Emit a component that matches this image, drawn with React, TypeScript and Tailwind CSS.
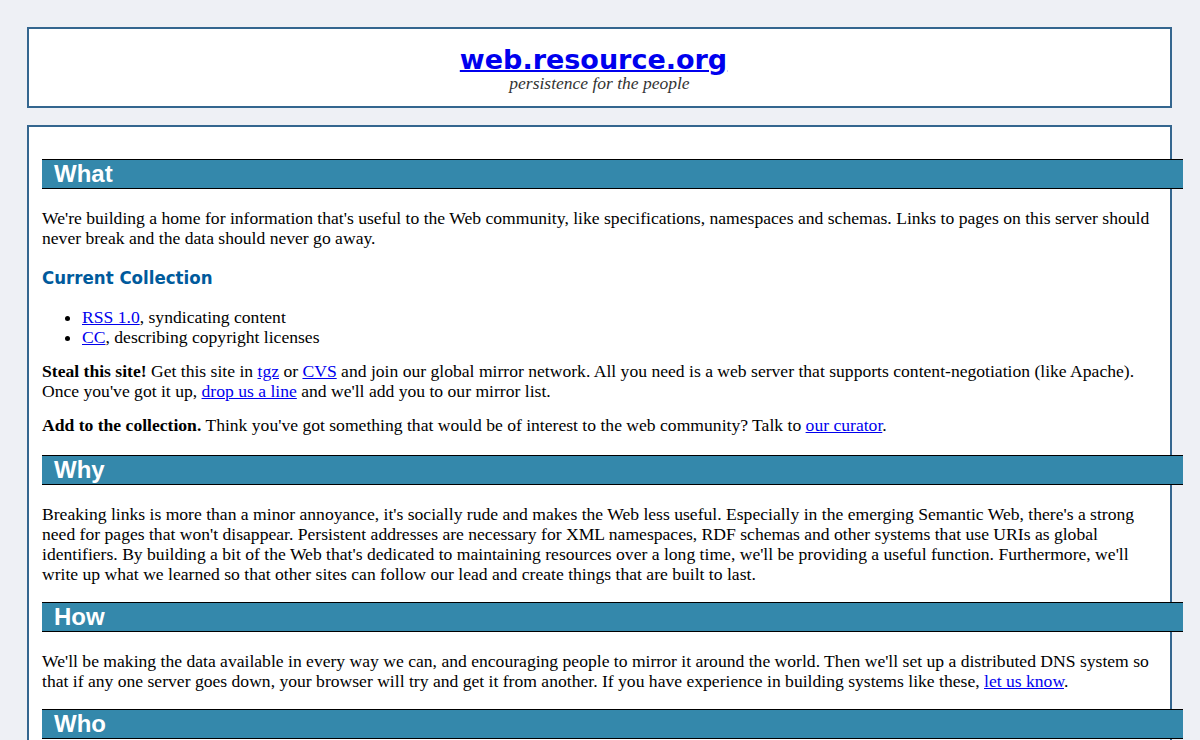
const serif = 'font-["Liberation_Serif",serif]'

function Bar({ children, first }: { children: React.ReactNode; first?: boolean }) {
  return (
    <h2
      className={
        (first ? 'mt-[32px] ' : 'mt-[18px] ') +
        'ml-[13px] w-full border-y border-black bg-[#3488ab] pl-[12px] font-["Liberation_Sans",Arial,sans-serif] text-[24px] leading-[28px] font-bold text-white'
      }
    >
      {children}
    </h2>
  )
}

function A({ children }: { children: React.ReactNode }) {
  return (
    <a href="#" className="text-[#0000ee] underline">
      {children}
    </a>
  )
}

export default function App() {
  return (
    <div className={'min-h-screen bg-[#eef0f5] pt-[27px] pl-[27px] pr-[28px] text-[17.6px] leading-[20px] text-black ' + serif}>
      {/* Masthead */}
      <div className="flex h-[81px] flex-col items-center border-2 border-[#34668f] bg-white pt-[14px]">
        <a
          href="#"
          className='mr-[12px] font-["DejaVu_Sans",Verdana,sans-serif] text-[27px] leading-[34px] font-bold text-[#0000ee] underline decoration-2'
        >
          web.resource.org
        </a>
        <div className="-mt-[3px] text-[17.5px] leading-[18px] text-[#333] italic">persistence for the people</div>
      </div>

      {/* Body */}
      <div className="mt-[17px] border-2 border-[#34668f] bg-white pb-[40px]">
        <Bar first>What</Bar>
        <div className="pl-[13px] pr-[6px]">
          <p className="mt-[19px]">
            We're building a home for information that's useful to the Web community, like specifications, namespaces
            and schemas. Links to pages on this server should never break and the data should never go away.
          </p>
          <h3 className='mt-[18px] font-["DejaVu_Sans_Condensed","DejaVu_Sans",sans-serif] text-[18.5px] leading-[24px] font-bold text-[#005a9c]'>
            Current Collection
          </h3>
          <ul className="mt-[17px] list-disc pl-[40px]">
            <li>
              <A>RSS 1.0</A>, syndicating content
            </li>
            <li>
              <A>CC</A>, describing copyright licenses
            </li>
          </ul>
          <p className="mt-[14px]">
            <strong>Steal this site!</strong> Get this site in <A>tgz</A> or <A>CVS</A> and join our global mirror
            network. All you need is a web server that supports content-negotiation (like Apache). Once you've got it up,{' '}
            <A>drop us a line</A> and we'll add you to our mirror list.
          </p>
          <p className="mt-[14px]">
            <strong>Add to the collection.</strong> Think you've got something that would be of interest to the web
            community? Talk to <A>our curator</A>.
          </p>
        </div>

        <div className="mt-[20px]" />
        <Bar>Why</Bar>
        <div className="pl-[13px] pr-[6px]">
          <p className="mt-[19px]">
            Breaking links is more than a minor annoyance, it's socially rude and makes the Web less useful. Especially in
            the emerging Semantic Web, there's a strong need for pages that won't disappear. Persistent addresses are
            necessary for XML namespaces, RDF schemas and other systems that use URIs as global identifiers. By building a
            bit of the Web that's dedicated to maintaining resources over a long time, we'll be providing a useful
            function. Furthermore, we'll write up what we learned so that other sites can follow our lead and create
            things that are built to last.
          </p>
        </div>

        <Bar>How</Bar>
        <div className="pl-[13px] pr-[6px]">
          <p className="mt-[19px]">
            We'll be making the data available in every way we can, and encouraging people to mirror it around the world.
            Then we'll set up a distributed DNS system so that if any one server goes down, your browser will try and get
            it from another. If you have experience in building systems like these, <A>let us know</A>.
          </p>
        </div>

        <Bar>Who</Bar>
        <div className="pl-[13px] pr-[6px]">
          <p className="mt-[19px]">
            This site is run by volunteers who care about the long-term health of the Web.
          </p>
        </div>
      </div>
    </div>
  )
}
